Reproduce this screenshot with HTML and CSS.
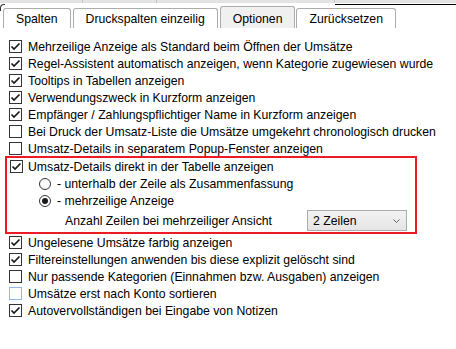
FILE: index.html
```html
<!DOCTYPE html>
<html lang="de">
<head>
    <meta charset="UTF-8">
    <title>Optionen</title>
    <link rel="stylesheet" href="styles.css">
</head>
<body>

    <div class="header-strip">
        <div class="hcell hcell-1"></div>
        <div class="hcell hcell-2"></div>
        <div class="hcell hcell-3"></div>
    </div>
    <div class="rule"></div>

    <div class="tabs">
        <div class="tab">Spalten</div>
        <div class="tab">Druckspalten einzeilig</div>
        <div class="tab tab-active">Optionen</div>
        <div class="tab">Zurücksetzen</div>
    </div>

    <div class="options">
        <label class="row"><span class="check on"><svg viewBox="0 0 11 11"><path d="M1.5 5.5 L4 8 L9.5 2.5"/></svg></span>Mehrzeilige Anzeige als Standard beim Öffnen der Umsätze</label>
        <label class="row"><span class="check on"><svg viewBox="0 0 11 11"><path d="M1.5 5.5 L4 8 L9.5 2.5"/></svg></span>Regel-Assistent automatisch anzeigen, wenn Kategorie zugewiesen wurde</label>
        <label class="row"><span class="check on"><svg viewBox="0 0 11 11"><path d="M1.5 5.5 L4 8 L9.5 2.5"/></svg></span>Tooltips in Tabellen anzeigen</label>
        <label class="row"><span class="check on"><svg viewBox="0 0 11 11"><path d="M1.5 5.5 L4 8 L9.5 2.5"/></svg></span>Verwendungszweck in Kurzform anzeigen</label>
        <label class="row"><span class="check on"><svg viewBox="0 0 11 11"><path d="M1.5 5.5 L4 8 L9.5 2.5"/></svg></span>Empfänger / Zahlungspflichtiger Name in Kurzform anzeigen</label>
        <label class="row"><span class="check"></span>Bei Druck der Umsatz-Liste die Umsätze umgekehrt chronologisch drucken</label>
        <label class="row"><span class="check"></span>Umsatz-Details in separatem Popup-Fenster anzeigen</label>

        <div class="details">
            <label class="row"><span class="check on"><svg viewBox="0 0 11 11"><path d="M1.5 5.5 L4 8 L9.5 2.5"/></svg></span>Umsatz-Details direkt in der Tabelle anzeigen</label>
            <label class="row radio-row"><span class="radio"></span>- unterhalb der Zeile als Zusammenfassung</label>
            <label class="row radio-row"><span class="radio on"></span>- mehrzeilige Anzeige</label>
            <div class="row count-row">
                <span>Anzahl Zeilen bei mehrzeiliger Ansicht</span>
                <div class="select">
                    <span>2 Zeilen</span>
                    <svg class="chevron" viewBox="0 0 7 4"><path d="M0.5 0.5 L3.5 3.5 L6.5 0.5"/></svg>
                </div>
            </div>
        </div>

        <label class="row"><span class="check on"><svg viewBox="0 0 11 11"><path d="M1.5 5.5 L4 8 L9.5 2.5"/></svg></span>Ungelesene Umsätze farbig anzeigen</label>
        <label class="row"><span class="check on"><svg viewBox="0 0 11 11"><path d="M1.5 5.5 L4 8 L9.5 2.5"/></svg></span>Filtereinstellungen anwenden bis diese explizit gelöscht sind</label>
        <label class="row"><span class="check"></span>Nur passende Kategorien (Einnahmen bzw. Ausgaben) anzeigen</label>
        <label class="row"><span class="check hover"></span>Umsätze erst nach Konto sortieren</label>
        <label class="row"><span class="check on"><svg viewBox="0 0 11 11"><path d="M1.5 5.5 L4 8 L9.5 2.5"/></svg></span>Autovervollständigen bei Eingabe von Notizen</label>
    </div>

</body>
</html>
```

FILE: styles.css
```css
:root {
    --tab-border: #acacac;
    --box-red: #ed1c24;
    --text-color: #000;
}
body {
    margin: 0;
    background: #fff;
    color: var(--text-color);
    font-family: "Liberation Sans", Arial, sans-serif;
    font-size: 12.25px;
}
.header-strip {
    display: flex;
    height: 3px;
    background: #e3e3e3;
}
.hcell { border-right: 1px solid #c6c6c6; }
.hcell-1 { width: 82px; }
.hcell-2 { width: 73px; }
.hcell-3 { width: 177px; }
.rule {
    height: 1px;
    margin: 1px 0 0 335px;
    background: #000;
}
.tabs {
    position: relative;
    display: flex;
    align-items: flex-end;
    height: 22px;
    margin-top: 1px;
    padding-left: 3px;
}
.tabs::before {
    content: "";
    position: absolute;
    left: 0;
    top: -2px;
    width: 4px;
    height: 6px;
    border-left: 1px solid #333;
    border-top: 1px solid #333;
    border-top-left-radius: 4px;
}
.tab {
    box-sizing: border-box;
    display: flex;
    align-items: center;
    height: 20px;
    padding: 0 12px;
    border: 1px solid var(--tab-border);
    border-bottom: none;
    border-radius: 3px 3px 0 0;
    background: #fff;
    white-space: nowrap;
}
.tab + .tab { margin-left: 2px; }
.tab-active {
    height: 22px;
    padding-top: 3px;
    background: #f0f0f0;
}
.tab-active, .tab-active + .tab { margin-left: 1px; }
.options {
    padding: 10px 0 0 9px;
}
.row {
    display: flex;
    align-items: center;
    gap: 6px;
    height: 17px;
    white-space: nowrap;
}
.check {
    box-sizing: border-box;
    flex: none;
    width: 13px;
    height: 13px;
    border: 1px solid #333;
    background: #fff;
}
.check svg {
    display: block;
    width: 11px;
    height: 11px;
    fill: none;
    stroke: #1a1a1a;
    stroke-width: 1.7;
}
.check.hover { border-color: #90b9ea; }
.details {
    box-sizing: border-box;
    width: 412px;
    margin: -1px 0 0 -4px;
    padding: 0 0 1px 3px;
    border: 2px solid var(--box-red);
}
.details .row { gap: 5px; }
.radio-row { padding-left: 29px; }
.radio-row.row { gap: 6px; }
.radio {
    box-sizing: border-box;
    position: relative;
    flex: none;
    width: 12px;
    height: 12px;
    border: 1px solid #333;
    border-radius: 50%;
    background: #fff;
}
.radio.on::after {
    content: "";
    position: absolute;
    left: 2px;
    top: 2px;
    width: 6px;
    height: 6px;
    border-radius: 50%;
    background: #1a1a1a;
}
.count-row {
    height: 21px;
    margin-top: 1px;
    padding: 0 8px 0 55px;
    justify-content: space-between;
}
.select {
    box-sizing: border-box;
    display: flex;
    align-items: center;
    justify-content: space-between;
    width: 100px;
    height: 21px;
    padding: 0 6px 0 5px;
    border: 1px solid var(--tab-border);
    background: linear-gradient(#f2f2f2, #e5e5e5);
}
.chevron {
    width: 7px;
    height: 4px;
    fill: none;
    stroke: #666;
    stroke-width: 1;
}
```
